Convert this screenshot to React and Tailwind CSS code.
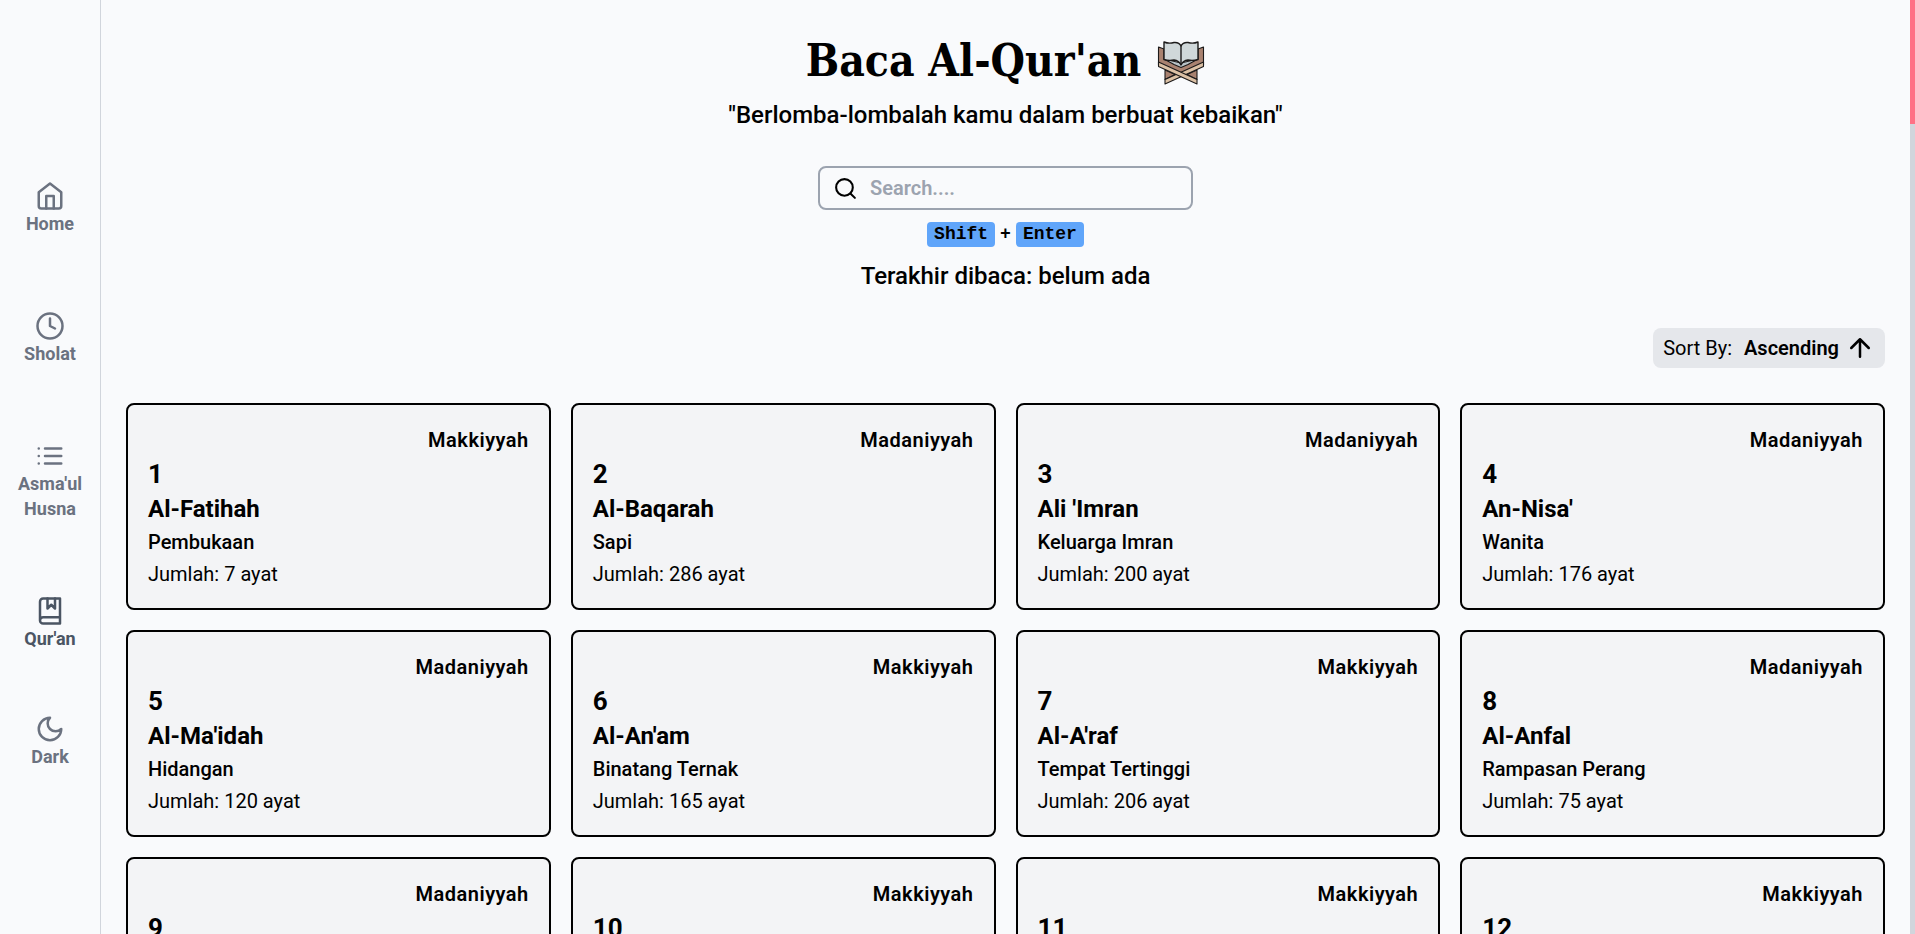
import React from "react";

const surahs = [
  ["Al-Fatihah", "Pembukaan", 7, "Makkiyyah"],
  ["Al-Baqarah", "Sapi", 286, "Madaniyyah"],
  ["Ali 'Imran", "Keluarga Imran", 200, "Madaniyyah"],
  ["An-Nisa'", "Wanita", 176, "Madaniyyah"],
  ["Al-Ma'idah", "Hidangan", 120, "Madaniyyah"],
  ["Al-An'am", "Binatang Ternak", 165, "Makkiyyah"],
  ["Al-A'raf", "Tempat Tertinggi", 206, "Makkiyyah"],
  ["Al-Anfal", "Rampasan Perang", 75, "Madaniyyah"],
  ["At-Taubah", "Pengampunan", 129, "Madaniyyah"],
  ["Yunus", "Yunus", 109, "Makkiyyah"],
  ["Hud", "Hud", 123, "Makkiyyah"],
  ["Yusuf", "Yusuf", 111, "Makkiyyah"],
];

function Icon({ children, className = "size-[30px]" }) {
  return (
    <svg
      viewBox="0 0 24 24"
      fill="none"
      stroke="currentColor"
      strokeWidth="2"
      strokeLinecap="round"
      strokeLinejoin="round"
      aria-hidden="true"
      className={className}
    >
      {children}
    </svg>
  );
}

const links = [
  {
    label: "Home",
    icon: (
      <>
        <path d="m3 9 9-7 9 7v11a2 2 0 0 1-2 2H5a2 2 0 0 1-2-2z" />
        <path d="M9 22V12h6v10" />
      </>
    ),
  },
  {
    label: "Sholat",
    icon: (
      <>
        <circle cx="12" cy="12" r="10" />
        <path d="M12 6v6l4 2" />
      </>
    ),
  },
  {
    label: "Asma'ul Husna",
    icon: <path d="M8 6h13M8 12h13M8 18h13M3 6h.01M3 12h.01M3 18h.01" />,
  },
  {
    label: "Qur'an",
    active: true,
    icon: (
      <>
        <path d="M4 19.5v-15A2.5 2.5 0 0 1 6.5 2H20v20H6.5a2.5 2.5 0 0 1 0-5H20" />
        <path d="M10 2v8l3-3 3 3V2" />
      </>
    ),
  },
];

function Sidebar() {
  return (
    <aside className="flex w-[101px] shrink-0 flex-col items-center justify-center gap-[63px] border-r border-gray-300 pt-4 text-center text-lg leading-[25px] font-bold text-[#6b7280]">
      <nav className="flex flex-col items-center gap-[75px]">
        {links.map((l) => (
          <a
            key={l.label}
            href="#"
            className={
              l.active
                ? "flex w-20 flex-col items-center text-[#4b5563]"
                : "flex w-20 flex-col items-center"
            }
          >
            <Icon>{l.icon}</Icon>
            <span>{l.label}</span>
          </a>
        ))}
      </nav>
      <button type="button" className="flex flex-col items-center">
        <Icon>
          <path d="M12 3a6 6 0 0 0 9 9 9 9 0 1 1-9-9Z" />
        </Icon>
        <span>Dark</span>
      </button>
    </aside>
  );
}

function BookStand() {
  return (
    <svg viewBox="0 0 48 48" className="size-12" aria-hidden="true" stroke="#1c1a1a" strokeWidth="1.1" strokeLinejoin="round">
      <path d="M1.500 10 7 12V22L24 28 41 22V12L46.500 10V28L24 38 1.500 28Z" fill="#a98270" />
      <path d="M8 33 18 37.500 8 42.500Z" fill="#a98270" />
      <path d="M40 33 30 37.500 40 42.500Z" fill="#a98270" />
      <path d="M7 22 24 26 41 22 31 27.500 24 30.500 17 27.500Z" fill="#b9c3c7" />
      <path d="M7 5Q12 7 17 5.500 22 5 24 9 26 5 31 5.500 36 7 41 5V22.500Q36 24 31 23 26 23.500 24 28 22 23.500 17 23 12 24 7 22.500Z" fill="#d0d8da" strokeWidth="1.4" />
      <path d="M24 9V28" fill="none" strokeWidth="1.4" />
      <path d="M46.500 25V29.500L8 47V42.500Z" fill="#dcc1a5" />
      <path d="M1.500 25V29.500L40 47V42.500Z" fill="#dcc1a5" />
    </svg>
  );
}

function SurahCard({ number, name, meaning, verses, place }) {
  return (
    <li>
      <a
        href="#"
        className="flex flex-col gap-1 rounded-lg border-2 border-black bg-gray-100 p-5 pt-[21px] text-xl leading-7"
      >
        <span className="self-end font-semibold tracking-wide">{place}</span>
        <span className="text-[26px] leading-8 font-bold">{number}</span>
        <h2 className="text-2xl leading-[30px] font-bold">{name}</h2>
        <p className="font-medium">{meaning}</p>
        <p>Jumlah: {verses} ayat</p>
      </a>
    </li>
  );
}

export default function App() {
  return (
    <div className="flex h-screen overflow-hidden bg-[#f9fafc] font-[Roboto,sans-serif] text-black">
      <Sidebar />
      <main className="min-w-0 flex-1 overflow-y-auto px-[25px] [scrollbar-width:none]">
        <header className="flex flex-col items-center pt-[33px]">
          <h1 className="flex items-center gap-4 font-['DejaVu_Serif_Condensed','DejaVu_Serif',serif] text-[44px] leading-[56px] font-bold">
            Baca Al-Qur'an
            <BookStand />
          </h1>
          <p className="mt-2 text-2xl leading-9 font-medium">
            "Berlomba-lombalah kamu dalam berbuat kebaikan"
          </p>
          <label className="mt-[33px] flex h-11 w-[375px] items-center gap-3 rounded-lg border-2 border-[#9ca3af] px-[13px]">
            <Icon className="size-[25px] shrink-0">
              <circle cx="11" cy="11" r="8" />
              <path d="m21 21-4.300-4.300" />
            </Icon>
            <input
              type="text"
              aria-label="Search"
              placeholder="Search...."
              className="min-w-0 flex-1 bg-transparent text-xl font-semibold outline-none placeholder:text-[#9ca3af]"
            />
          </label>
          <div className="mt-3 flex items-center gap-[5px] font-['Liberation_Mono',monospace] text-lg leading-[25px] font-bold">
            <kbd className="rounded-sm bg-[#60a5fa] px-[7px] font-['Liberation_Mono',monospace]">Shift</kbd>
            <span>+</span>
            <kbd className="rounded-sm bg-[#60a5fa] px-[7px] font-['Liberation_Mono',monospace]">Enter</kbd>
          </div>
          <p className="mt-[13px] text-2xl leading-8 font-medium">Terakhir dibaca: belum ada</p>
        </header>
        <div className="mt-9 flex justify-end">
          <button type="button" className="flex h-10 items-center rounded-lg bg-gray-200 px-2.5 text-xl">
            <span>Sort By:</span>
            <span className="mr-1.5 ml-3 font-semibold">Ascending</span>
            <Icon>
              <path d="M12 19V5M5 12l7-7 7 7" />
            </Icon>
          </button>
        </div>
        <ul className="mt-[35px] grid grid-cols-4 gap-5">
          {surahs.map(([name, meaning, verses, place], i) => (
            <SurahCard key={name} number={i + 1} name={name} meaning={meaning} verses={verses} place={place} />
          ))}
        </ul>
      </main>
      <div className="w-[5px] shrink-0 bg-gray-300">
        <div className="h-[13.3%] bg-[#ff7085]" />
      </div>
    </div>
  );
}
